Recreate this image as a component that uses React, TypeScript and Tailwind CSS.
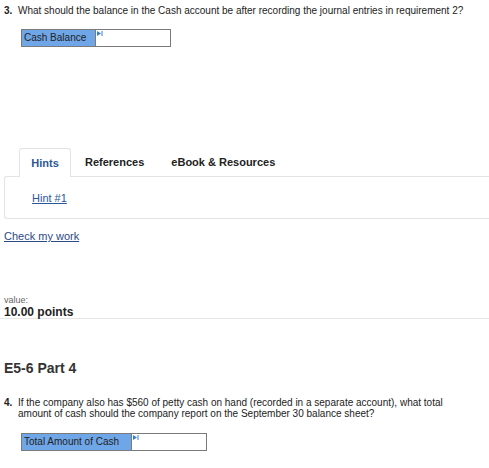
import React from "react";

const font = { fontFamily: '"Liberation Sans", Arial, sans-serif' };

function AnswerField({ label, labelW, inputW }: { label: string; labelW: string; inputW: string }) {
  return (
    <div className="flex h-[18px] border border-[#7a7a7a] w-fit">
      <div className={`${labelW} bg-[#6ea6e8] text-[10px] leading-[16px] pl-[2px] text-[#222]`}>{label}</div>
      <div className={`${inputW} relative bg-white border-l border-[#7a7a7a]`}>
        <svg className="absolute left-[1px] top-[1px]" width="6" height="5" viewBox="0 0 6 5">
          <path d="M0 0 L4 2.5 L0 5 Z" fill="#3a7bd5" />
          <rect x="4.5" y="0" width="1" height="5" fill="#3a7bd5" />
        </svg>
      </div>
    </div>
  );
}

export default function App() {
  return (
    <div className="w-[489px] h-[468px] bg-white text-[#222] overflow-hidden" style={font}>
      <div className="flex pt-[5px] pl-[4px] text-[10px] leading-[12px]">
        <span className="font-bold w-[14px]">3.</span>
        <span>What should the balance in the Cash account be after recording the journal entries in requirement 2?</span>
      </div>
      <div className="pl-[21px] pt-[12px]">
        <AnswerField label="Cash Balance" labelW="w-[73px]" inputW="w-[75px]" />
      </div>

      <div className="mt-[100px] pl-[4px]">
        <div className="flex items-end text-[11px] font-bold">
          <div className="ml-[15px] w-[52px] h-[29px] border border-b-0 border-[#e3e3e3] rounded-t-[3px] bg-white flex items-center justify-center text-[#2c5896] relative top-[1px]">
            Hints
          </div>
          <div className="ml-[14px] h-[28px] flex items-center text-[#222]">References</div>
          <div className="ml-[27px] h-[28px] flex items-center text-[#222]">eBook &amp; Resources</div>
        </div>
        <div className="h-[43px] border border-r-0 border-[#e3e3e3] rounded-l-[3px] pl-[27px] pt-[15px] text-[11px] leading-[13px]">
          <a className="text-[#2c5896] underline">Hint #1</a>
        </div>
      </div>
      <div className="pl-[4px] pt-[11px] text-[11px] leading-[13px]">
        <a className="text-[#2c4a86] underline">Check my work</a>
      </div>

      <div className="mt-[52px] pl-[4px] border-b border-[#e6e6e6]">
        <div className="text-[9px] leading-[11px] text-[#666]">value:</div>
        <div className="text-[12px] leading-[12px] font-bold text-[#222]">10.00 points</div>
      </div>

      <div className="pl-[4px] pt-[41px] text-[14px] font-bold leading-[16px] text-[#333]">E5-6 Part 4</div>

      <div className="flex pt-[21px] pl-[4px] text-[10px] leading-[11px]">
        <span className="font-bold w-[14px] shrink-0">4.</span>
        <span className="w-[430px]">
          If the company also has $560 of petty cash on hand (recorded in a separate account), what total amount of cash should the company report on the September 30 balance sheet?
        </span>
      </div>
      <div className="pl-[21px] pt-[14px]">
        <AnswerField label="Total Amount of Cash" labelW="w-[109px]" inputW="w-[75px]" />
      </div>
    </div>
  );
}
